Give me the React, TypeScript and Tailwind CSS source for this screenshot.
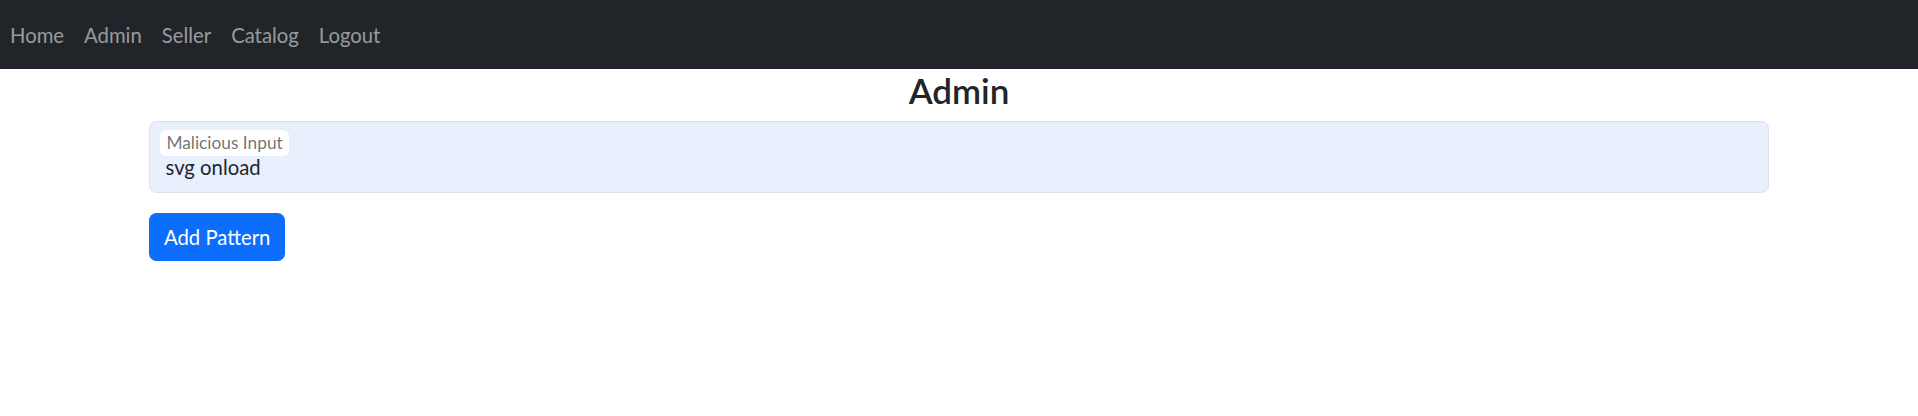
export default function App() {
  const font = { fontFamily: 'Lato, "Noto Sans", sans-serif' };
  const links = ["Home", "Admin", "Seller", "Catalog", "Logout"];
  return (
    <div className="min-h-[416px] bg-white" style={font}>
      <nav className="flex h-[69px] items-center bg-[#212529]">
        <ul className="flex">
          {links.map((l) => (
            <li key={l}>
              <a className="block px-[10px] text-[20.3px] leading-[30px] text-[rgba(255,255,255,0.55)]">{l}</a>
            </li>
          ))}
        </ul>
      </nav>
      <div className="mx-auto w-[1650px] px-[15px]">
        <h3 className="mb-[10px] text-center text-[35px] font-semibold leading-[42px] text-[#212529]">Admin</h3>
        <div className="relative h-[72px] rounded-[7.5px] border border-[#dee2e6] bg-[#e8f0fe] px-[15.5px] pt-[30px]">
          <div className="absolute left-[10px] top-[8px] flex h-[26px] items-center rounded-[6px] bg-white px-[6.5px] text-[17.3px] text-[rgba(33,37,41,0.65)]">
            Malicious Input
          </div>
          <div className="text-[20.3px] leading-[30px] text-[#212529]">svg onload</div>
        </div>
        <button className="mt-[20px] h-[48px] rounded-[7.5px] bg-[#0d6efd] px-[15px] text-[20.3px] leading-[30px] text-white">
          Add Pattern
        </button>
      </div>
    </div>
  );
}
